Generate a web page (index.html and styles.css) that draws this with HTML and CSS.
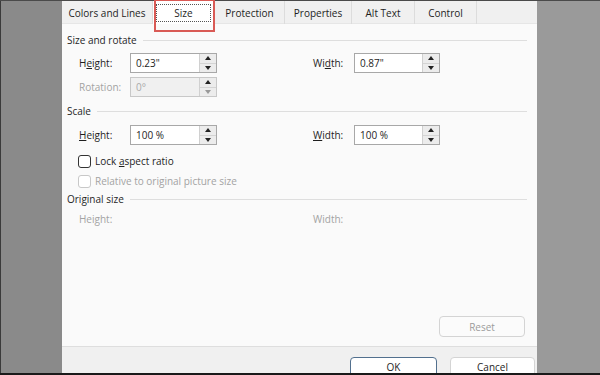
FILE: index.html
```html
<!DOCTYPE html>
<html>
<head>
<meta charset="utf-8">
<link rel="stylesheet" href="styles.css">
</head>
<body>
<div class="screen">
  <div class="side side-left"></div>
  <div class="dialog">
    <div class="tabs">
      <div class="tab t1">Colors and Lines</div>
      <div class="tab t2 active"><span class="focus">Size</span></div>
      <div class="tab t3">Protection</div>
      <div class="tab t4">Properties</div>
      <div class="tab t5">Alt Text</div>
      <div class="tab t6">Control</div>
      <div class="tab-rest"></div>
      <div class="annot"></div>
    </div>
    <div class="panel">
      <div class="group"><span class="gtitle">Size and rotate</span><span class="gline"></span></div>
      <div class="row r1">
        <div class="field">
          <span class="lbl">H<u>e</u>ight:</span>
          <div class="spin"><span class="val">0.23"</span><div class="btns"><span class="b up"></span><span class="b dn"></span></div></div>
        </div>
        <div class="field right">
          <span class="lbl lbl-r">Wi<u>d</u>th:</span>
          <div class="spin w"><span class="val">0.87"</span><div class="btns"><span class="b up"></span><span class="b dn"></span></div></div>
        </div>
      </div>
      <div class="row r2">
        <div class="field">
          <span class="lbl dis">Rotation:</span>
          <div class="spin disabled"><span class="val">0°</span><div class="btns"><span class="b up"></span><span class="b dn"></span></div></div>
        </div>
      </div>
      <div class="group g2"><span class="gtitle">Scale</span><span class="gline"></span></div>
      <div class="row r3">
        <div class="field">
          <span class="lbl"><u>H</u>eight:</span>
          <div class="spin"><span class="val">100 %</span><div class="btns"><span class="b up"></span><span class="b dn"></span></div></div>
        </div>
        <div class="field right">
          <span class="lbl lbl-r"><u>W</u>idth:</span>
          <div class="spin w"><span class="val">100 %</span><div class="btns"><span class="b up"></span><span class="b dn"></span></div></div>
        </div>
      </div>
      <div class="check c1"><span class="box"></span><span>Lock <u>a</u>spect ratio</span></div>
      <div class="check c2 dis"><span class="box"></span><span>Relative to original picture size</span></div>
      <div class="group g3"><span class="gtitle">Original size</span><span class="gline"></span></div>
      <div class="row r4">
        <span class="lbl dis">Height:</span>
        <span class="lbl dis lbl-w">Width:</span>
      </div>
      <div class="reset-row"><div class="btn reset">Reset</div></div>
    </div>
    <div class="footer">
      <div class="btn ok">OK</div>
      <div class="btn cancel">Cancel</div>
    </div>
  </div>
  <div class="side side-right"></div>
</div>
</body>
</html>
```
FILE: styles.css
```css
* { box-sizing: border-box; }
html, body { margin: 0; padding: 0; }
body {
  width: 600px;
  height: 375px;
  overflow: hidden;
  background: #8b8b8b;
  font-family: "Open Sans", "Noto Sans", sans-serif;
  font-size: 10px;
  color: #1e1e1e;
}
.screen {
  display: flex;
  width: 600px;
  height: 375px;
  border-top: 1px solid #4a4a4a;
  border-bottom: 2px solid #1a1a1a;
}
.side { height: 100%; }
.side-left { width: 62px; background: #8a8a8a; border-left: 1px solid #3a3a3a; }
.side-right { width: 63px; background: #9a9a9a; }
.dialog {
  width: 475px;
  display: flex;
  flex-direction: column;
  background: #fafafa;
}
.tabs {
  position: relative;
  display: flex;
  height: 23px;
  background: #f0f0f0;
  border-bottom: 1px solid #e6e6e6;
}
.tab {
  display: flex;
  align-items: center;
  justify-content: center;
  height: 23px;
  border-right: 1px solid #dcdcdc;
  white-space: nowrap;
}
.t1 { width: 91px; }
.t2 { width: 62px; background: #fff; }
.t3 { width: 70px; }
.t4 { width: 67px; }
.t5 { width: 63px; }
.t6 { width: 62px; }
.tab-rest { flex: 1; }
.focus {
  display: flex;
  align-items: center;
  justify-content: center;
  width: 55px;
  height: 18px;
  border: 1px dotted #555;
}
.annot {
  position: absolute;
  left: 92px;
  top: -2px;
  width: 61px;
  height: 33px;
  border: 2px solid #d95a55;
}
.panel {
  flex: 1;
  display: flex;
  flex-direction: column;
  padding: 0 10px 9px 5px;
}
.group {
  display: flex;
  align-items: center;
  height: 14px;
  margin-top: 9px;
  color: #262626;
}
.g2 { margin-top: 7px; }
.g3 { margin-top: 4px; }
.gtitle { white-space: nowrap; padding-right: 6px; }
.gline { flex: 1; height: 1px; background: #dedede; }
.row { display: flex; align-items: center; padding-left: 12px; }
.r1 { margin-top: 6px; }
.r2 { margin-top: 4px; }
.r3 { margin-top: 7px; }
.r4 { margin-top: 6px; height: 14px; }
.field { display: flex; align-items: center; width: 234px; }
.field.right { width: auto; }
.lbl { width: 51px; white-space: nowrap; }
.lbl-r { width: 41px; }
.lbl-w { margin-left: 183px; }
.dis { color: #a3a3a3; }
.spin {
  display: flex;
  width: 87px;
  height: 20px;
  border: 1px solid #a8a8a8;
  background: #fff;
}
.spin.w { width: 86px; }
.spin.disabled { background: #f0f0f0; border-color: #c8c8c8; color: #aaa; }
.val { flex: 1; padding-left: 5px; line-height: 18px; }
.btns {
  width: 17px;
  display: flex;
  flex-direction: column;
  border-left: 1px solid #d0d0d0;
}
.b {
  flex: 1;
  display: flex;
  align-items: center;
  justify-content: center;
  background: #ececec;
}
.b.up { border-bottom: 1px solid #d4d4d4; }
.b.up::after {
  content: "";
  border-left: 3px solid transparent;
  border-right: 3px solid transparent;
  border-bottom: 4px solid #222;
}
.b.dn::after {
  content: "";
  border-left: 3px solid transparent;
  border-right: 3px solid transparent;
  border-top: 4px solid #222;
}
.disabled .b.dn::after { border-top-color: #999; }
.check {
  display: flex;
  align-items: center;
  height: 14px;
  padding-left: 11px;
  white-space: nowrap;
}
.c1 { margin-top: 9px; }
.c2 { margin-top: 6px; }
.box {
  width: 13px;
  height: 13px;
  border: 1px solid #333;
  border-radius: 3px;
  background: #fff;
  margin-right: 4px;
}
.c2 .box { border-color: #c8c8c8; }
.reset-row {
  margin-top: auto;
  display: flex;
  justify-content: flex-end;
  padding-right: 2px;
}
.btn {
  display: flex;
  align-items: center;
  justify-content: center;
  border: 1px solid #d4d4d4;
  border-radius: 4px;
  background: #fff;
}
.reset { width: 86px; height: 21px; color: #9c9c9c; background: #fbfbfb; }
.footer {
  height: 27px;
  display: flex;
  justify-content: flex-end;
  align-items: flex-start;
  gap: 13px;
  padding: 10px 2px 0 0;
  background: #f0f0f0;
  border-top: 1px solid #dedede;
  overflow: hidden;
}
.ok { width: 87px; height: 24px; border-color: #52708e; padding-bottom: 4px; }
.cancel { width: 85px; height: 24px; padding-bottom: 4px; }
```
